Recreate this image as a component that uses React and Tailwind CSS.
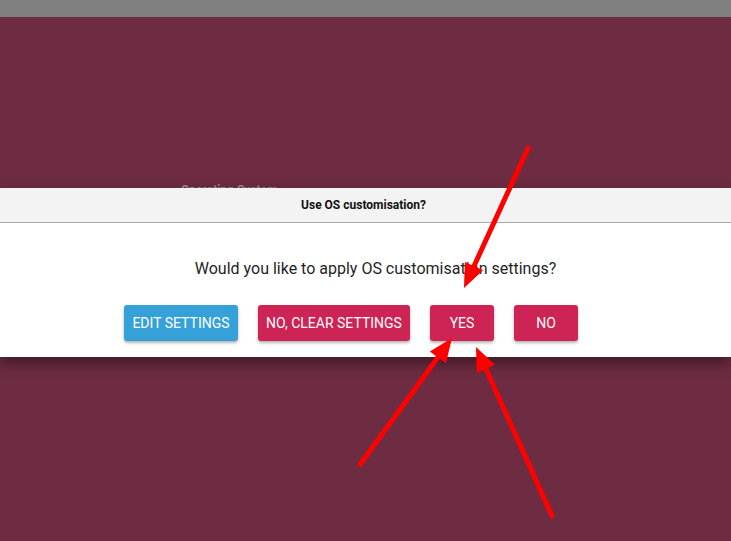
import React from "react";

const Arrow = ({ x1, y1, x2, y2 }) => {
  // line from tail (x1,y1) to tip (x2,y2) with a triangular head
  const dx = x2 - x1;
  const dy = y2 - y1;
  const len = Math.hypot(dx, dy);
  const ux = dx / len;
  const uy = dy / len;
  const headLen = 24;
  const headW = 10;
  const bx = x2 - ux * headLen;
  const by = y2 - uy * headLen;
  const pts = `${x2},${y2} ${bx - uy * headW},${by + ux * headW} ${bx + uy * headW},${by - ux * headW}`;
  return (
    <g>
      <line x1={x1} y1={y1} x2={bx + ux * 2} y2={by + uy * 2} stroke="#ff0000" strokeWidth="5" />
      <polygon points={pts} fill="#ff0000" />
    </g>
  );
};

const Button = ({ label, color, width }) => (
  <button
    className={`h-9 rounded-[3px] text-[14px] uppercase text-white shadow-[0_2px_3px_rgba(0,0,0,0.3)] ${color} ${width}`}
  >
    {label}
  </button>
);

export default function App() {
  return (
    <div
      className="relative w-[731px] h-[541px] overflow-hidden flex flex-col bg-[#6e2c42]"
      style={{ fontFamily: "Roboto, 'Liberation Sans', sans-serif" }}
    >
      <div className="h-[17px] bg-[#808080]" />

      <div className="relative flex-1 pt-[171px]">
        <div className="absolute top-[164px] left-[181px] text-[12px] font-bold text-[#9c8a90]">
          Operating System
        </div>

        <div className="relative shadow-[0_6px_14px_rgba(0,0,0,0.45)]">
          <div className="h-[35px] bg-[#f3f3f3] border-b border-[#a9a9a9] flex items-center justify-center">
            <span className="text-[12px] font-bold text-[#111] pr-[4px]">Use OS customisation?</span>
          </div>
          <div className="h-[134px] bg-white pt-[35px]">
            <p className="text-[16px] text-[#1f1f1f] text-center pl-[20px] leading-[22px]">
              Would you like to apply OS customisation settings?
            </p>
            <div className="flex gap-5 pl-[124px] mt-[25px]">
              <Button label="Edit Settings" color="bg-[#36a1d9]" width="w-[114px]" />
              <Button label="No, clear settings" color="bg-[#cd2355]" width="w-[152px]" />
              <Button label="Yes" color="bg-[#cd2355]" width="w-16" />
              <Button label="No" color="bg-[#cd2355]" width="w-16" />
            </div>
          </div>
        </div>
      </div>

      <svg className="absolute inset-0 pointer-events-none" width="731" height="541">
        <Arrow x1={529} y1={146} x2={464} y2={288} />
        <Arrow x1={359} y1={466} x2={452} y2={338} />
        <Arrow x1={553} y1={518} x2={476} y2={347} />
      </svg>
    </div>
  );
}
